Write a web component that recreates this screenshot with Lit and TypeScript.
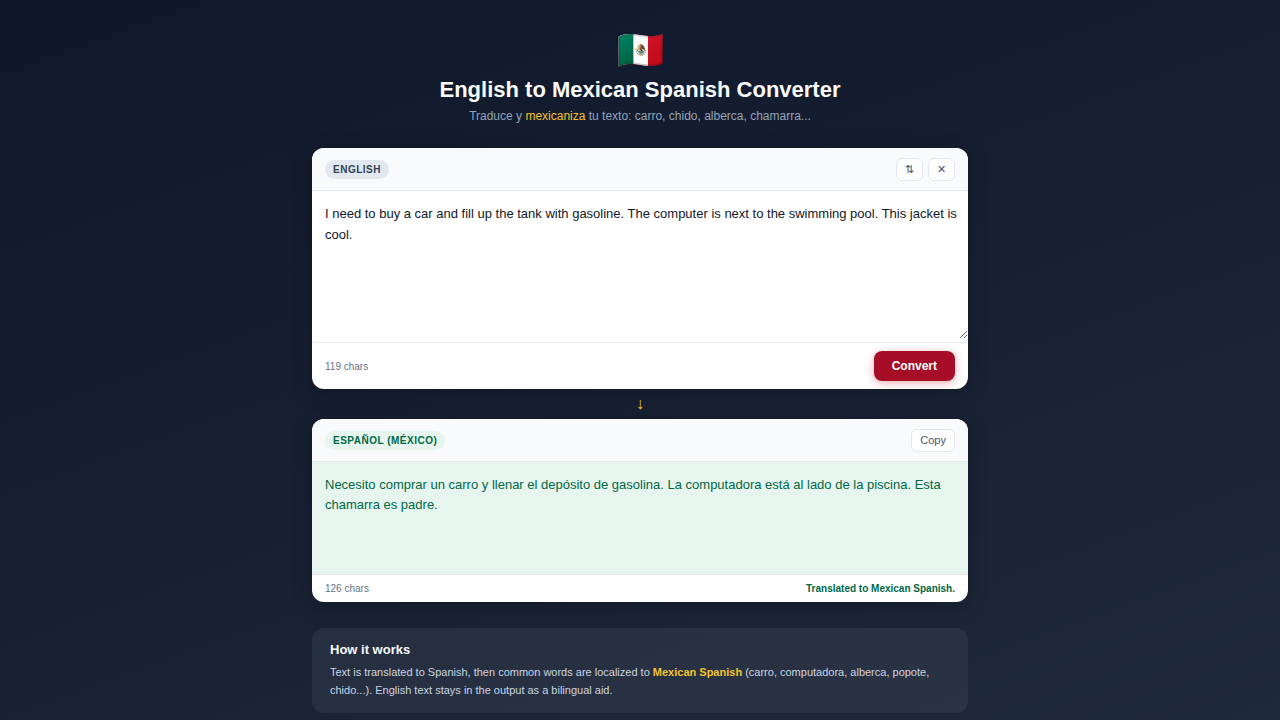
import { LitElement, html, css } from "lit";
import { customElement, state } from "lit/decorators.js";

@customElement("app-root")
export class AppRoot extends LitElement {
  static styles = css`
    :host {
      display: block;
      box-sizing: border-box;
      min-height: 100vh;
      padding: 25px 16px 7px;
      background: linear-gradient(160deg, #0f172a 0%, #1e293b 100%);
      font-family: "Liberation Sans", Arial, sans-serif;
      color: #0f172a;
    }
    * {
      box-sizing: border-box;
    }
    .app {
      max-width: 656px;
      margin: 0 auto;
    }
    header {
      text-align: center;
      margin-bottom: 22px;
    }
    .flag {
      font-size: 38px;
      line-height: 51px;
    }
    h1 {
      margin: 0;
      font-size: 22px;
      line-height: 27px;
      color: #f8fafc;
    }
    .sub {
      margin: 4px 0 0;
      font-size: 12px;
      line-height: 19px;
      color: #94a3b8;
    }
    .accent {
      color: #f4c430;
    }
    .card {
      display: flex;
      flex-direction: column;
      border-radius: 12px;
      overflow: hidden;
      background: #fff;
      box-shadow: 0 4px 20px rgba(0, 0, 0, 0.25);
    }
    .bar {
      display: flex;
      align-items: center;
      justify-content: space-between;
      padding: 9px 13px;
      background: #f8fafc;
      border-bottom: 1px solid #e2e8f0;
      min-height: 43px;
    }
    .tag {
      padding: 2px 8px;
      border-radius: 10px;
      background: #e2e8f0;
      color: #334155;
      font-size: 10px;
      line-height: 15px;
      font-weight: 700;
      letter-spacing: 0.05em;
      text-transform: uppercase;
    }
    .tag.mx {
      background: #e6f5ee;
      color: #006847;
    }
    .tools {
      display: flex;
      gap: 5px;
    }
    button {
      font-family: inherit;
      cursor: pointer;
    }
    .tool {
      height: 23px;
      min-width: 27px;
      padding: 0 8px;
      border: 1px solid #e2e8f0;
      border-radius: 6px;
      background: #fff;
      color: #475569;
      font-size: 11px;
      line-height: 15px;
    }
    textarea {
      display: block;
      width: 100%;
      height: 148px;
      margin: 0 0 3px;
      padding: 12px 10px 12px 13px;
      border: 0;
      outline: none;
      resize: vertical;
      background: #fff;
      color: #0f172a;
      font-family: inherit;
      font-size: 13px;
      line-height: 21px;
    }
    .output {
      display: block;
      min-height: 112px;
      padding: 13px;
      background: #e6f5ee;
      color: #006847;
      font-size: 13px;
      line-height: 20px;
    }
    .foot {
      display: flex;
      align-items: center;
      justify-content: space-between;
      padding: 8px 13px;
      border-top: 1px solid #e2e8f0;
      font-size: 10px;
      line-height: 11px;
      color: #64748b;
    }
    .convert {
      height: 30px;
      padding: 0 18px;
      border: 0;
      border-radius: 8px;
      background: #a50e26;
      color: #fff;
      font-size: 12px;
      font-weight: 700;
      box-shadow: 0 2px 8px rgba(206, 17, 38, 0.35);
    }
    .status {
      color: #006847;
      font-weight: 700;
    }
    .arrow {
      text-align: center;
      color: #f4c430;
      font-size: 16px;
      line-height: 30px;
    }
    .how {
      margin-top: 26px;
      padding: 13px 18px 14px;
      border-radius: 12px;
      background: rgba(255, 255, 255, 0.06);
      color: #cbd5e1;
      font-size: 11px;
      line-height: 18px;
    }
    .how h2 {
      margin: 0 0 5px;
      color: #f8fafc;
      font-size: 13px;
      line-height: 17px;
    }
    .how p {
      margin: 0;
    }
  `;

  @state() text =
    "I need to buy a car and fill up the tank with gasoline. The computer is next to the swimming pool. This jacket is cool.";

  render() {
    return html`
      <main class="app">
        <header>
          <div class="flag">🇲🇽</div>
          <h1>English to Mexican Spanish Converter</h1>
          <p class="sub">
            Traduce y <span class="accent">mexicaniza</span> tu texto: carro, chido, alberca, chamarra...
          </p>
        </header>

        <section class="card">
          <div class="bar">
            <label class="tag" for="source">English</label>
            <div class="tools">
              <button class="tool" aria-label="Swap">⇅</button>
              <button class="tool" aria-label="Clear" @click=${() => (this.text = "")}>✕</button>
            </div>
          </div>
          <textarea
            id="source"
            spellcheck="false"
            .value=${this.text}
            @input=${(e: Event) => (this.text = (e.target as HTMLTextAreaElement).value)}
          ></textarea>
          <div class="foot">
            <span>${this.text.length} chars</span>
            <button class="convert">Convert</button>
          </div>
        </section>

        <div class="arrow">↓</div>

        <section class="card">
          <div class="bar">
            <label class="tag mx" for="result">Español (México)</label>
            <button class="tool">Copy</button>
          </div>
          <output class="output" id="result"
            >Necesito comprar un carro y llenar el depósito de gasolina. La computadora está al lado de la piscina. Esta
            chamarra es padre.</output
          >
          <div class="foot">
            <span>126 chars</span>
            <span class="status">Translated to Mexican Spanish.</span>
          </div>
        </section>

        <section class="how">
          <h2>How it works</h2>
          <p>
            Text is translated to Spanish, then common words are localized to
            <strong class="accent">Mexican Spanish</strong> (carro, computadora, alberca, popote, chido...). English
            text stays in the output as a bilingual aid.
          </p>
        </section>
      </main>
    `;
  }
}
